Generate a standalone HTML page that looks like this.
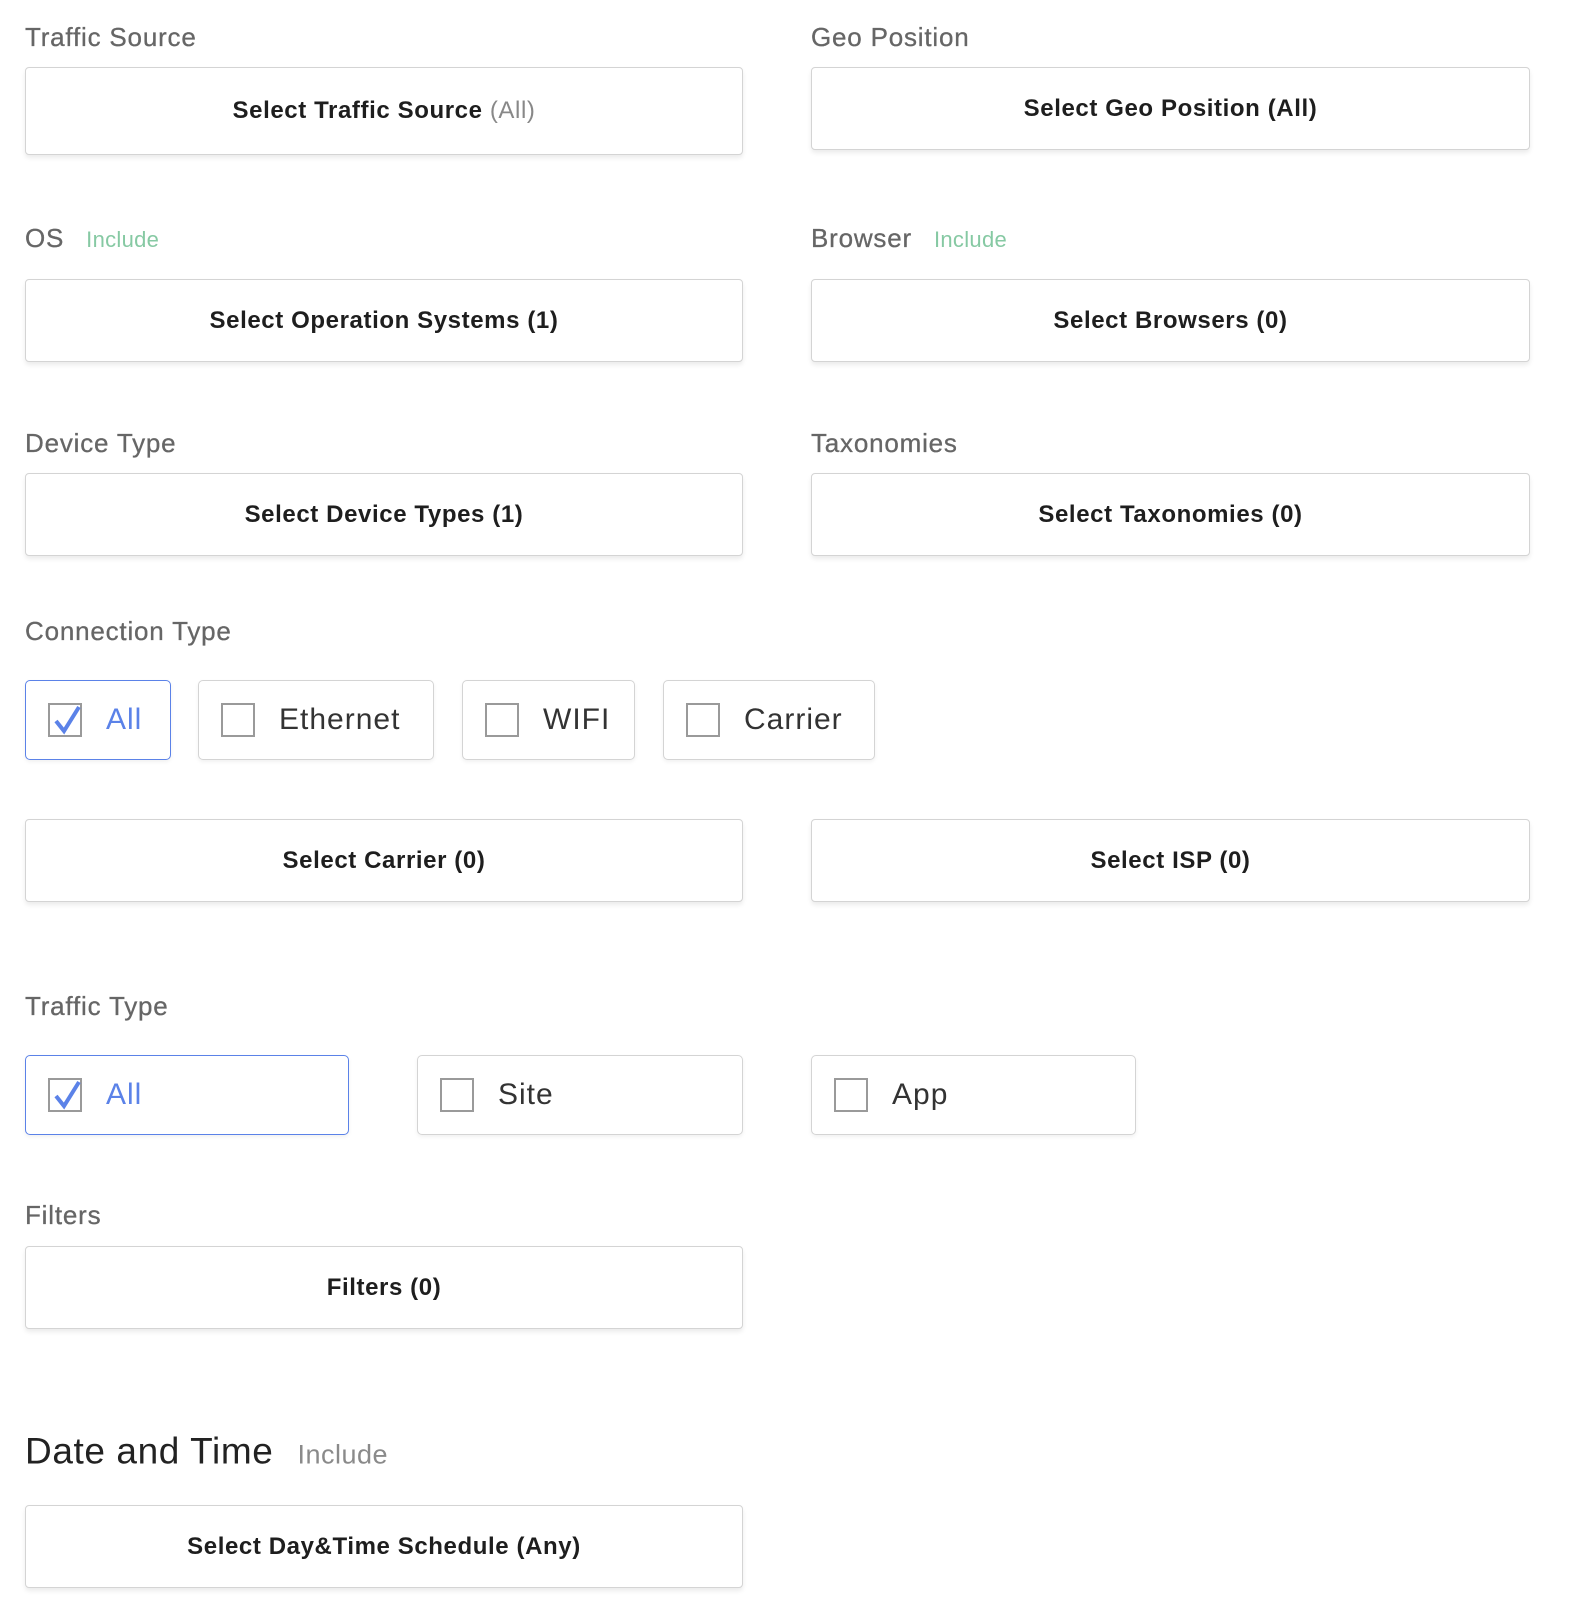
<!DOCTYPE html>
<html><head><meta charset="utf-8"><style>
*{margin:0;padding:0;box-sizing:border-box}
body{width:1569px;height:1608px;background:#fff;position:relative;font-family:"Liberation Sans",sans-serif;overflow:hidden}
.l{position:absolute;font-size:26px;color:#666;line-height:1;transform:translateY(-50%);letter-spacing:0.8px;-webkit-text-stroke:0.3px #666}
.inc{font-size:22px;color:#86c9a3;margin-left:22px;-webkit-text-stroke:0;letter-spacing:0.3px}
.b{position:absolute;border:1px solid #d4d4d4;border-radius:4px;box-shadow:0 3px 5px rgba(0,0,0,0.08);display:flex;align-items:center;justify-content:center;font-size:24px;font-weight:bold;letter-spacing:0.6px;color:#1e1e1e;background:#fff}
.c{position:absolute;border:1px solid #d4d4d4;border-radius:5px;box-shadow:0 2px 4px rgba(0,0,0,0.06);display:flex;align-items:center;font-size:30px;letter-spacing:1px;color:#333;background:#fff}
.c.on{border-color:#5b82e8;color:#5b82e8}
.sq{width:34px;height:34px;border:2px solid #9a9a9a;margin:0 24px 0 22px;position:relative;flex:none}
.on .sq svg{position:absolute;left:2px;top:-2px}
</style></head><body>
<div class="l" style="left:25px;top:37px">Traffic Source</div>
<div class="l" style="left:811px;top:37px">Geo Position</div>
<div class="b" style="left:25px;top:67px;width:718px;height:88px">Select Traffic Source&nbsp;<span style="color:#888;font-weight:normal">(All)</span></div>
<div class="b" style="left:811px;top:67px;width:719px;height:83px">Select Geo Position (All)</div>

<div class="l" style="left:25px;top:238px">OS<span class="inc">Include</span></div>
<div class="l" style="left:811px;top:238px">Browser<span class="inc">Include</span></div>
<div class="b" style="left:25px;top:279px;width:718px;height:83px">Select Operation Systems (1)</div>
<div class="b" style="left:811px;top:279px;width:719px;height:83px">Select Browsers (0)</div>

<div class="l" style="left:25px;top:443px">Device Type</div>
<div class="l" style="left:811px;top:443px">Taxonomies</div>
<div class="b" style="left:25px;top:473px;width:718px;height:83px">Select Device Types (1)</div>
<div class="b" style="left:811px;top:473px;width:719px;height:83px">Select Taxonomies (0)</div>

<div class="l" style="left:25px;top:631px">Connection Type</div>
<div class="c on" style="left:25px;top:680px;width:146px;height:80px"><div class="sq"><svg width="30" height="34" viewBox="0 0 30 34"><path d="M4 18 L12 28 L27 4" fill="none" stroke="#5b82e8" stroke-width="4"/></svg></div>All</div>
<div class="c" style="left:198px;top:680px;width:236px;height:80px"><div class="sq"></div>Ethernet</div>
<div class="c" style="left:462px;top:680px;width:173px;height:80px"><div class="sq"></div>WIFI</div>
<div class="c" style="left:663px;top:680px;width:212px;height:80px"><div class="sq"></div>Carrier</div>

<div class="b" style="left:25px;top:819px;width:718px;height:83px">Select Carrier (0)</div>
<div class="b" style="left:811px;top:819px;width:719px;height:83px">Select ISP (0)</div>

<div class="l" style="left:25px;top:1006px">Traffic Type</div>
<div class="c on" style="left:25px;top:1055px;width:324px;height:80px"><div class="sq"><svg width="30" height="34" viewBox="0 0 30 34"><path d="M4 18 L12 28 L27 4" fill="none" stroke="#5b82e8" stroke-width="4"/></svg></div>All</div>
<div class="c" style="left:417px;top:1055px;width:326px;height:80px"><div class="sq"></div>Site</div>
<div class="c" style="left:811px;top:1055px;width:325px;height:80px"><div class="sq"></div>App</div>

<div class="l" style="left:25px;top:1215px">Filters</div>
<div class="b" style="left:25px;top:1246px;width:718px;height:83px">Filters (0)</div>

<div class="l" style="left:25px;top:1451px;font-size:37px;color:#222;-webkit-text-stroke:0;letter-spacing:0.6px">Date and Time<span style="font-size:27px;color:#8a8a8a;margin-left:24px;letter-spacing:0.5px">Include</span></div>
<div class="b" style="left:25px;top:1505px;width:718px;height:83px">Select Day&amp;Time Schedule (Any)</div>
</body></html>
